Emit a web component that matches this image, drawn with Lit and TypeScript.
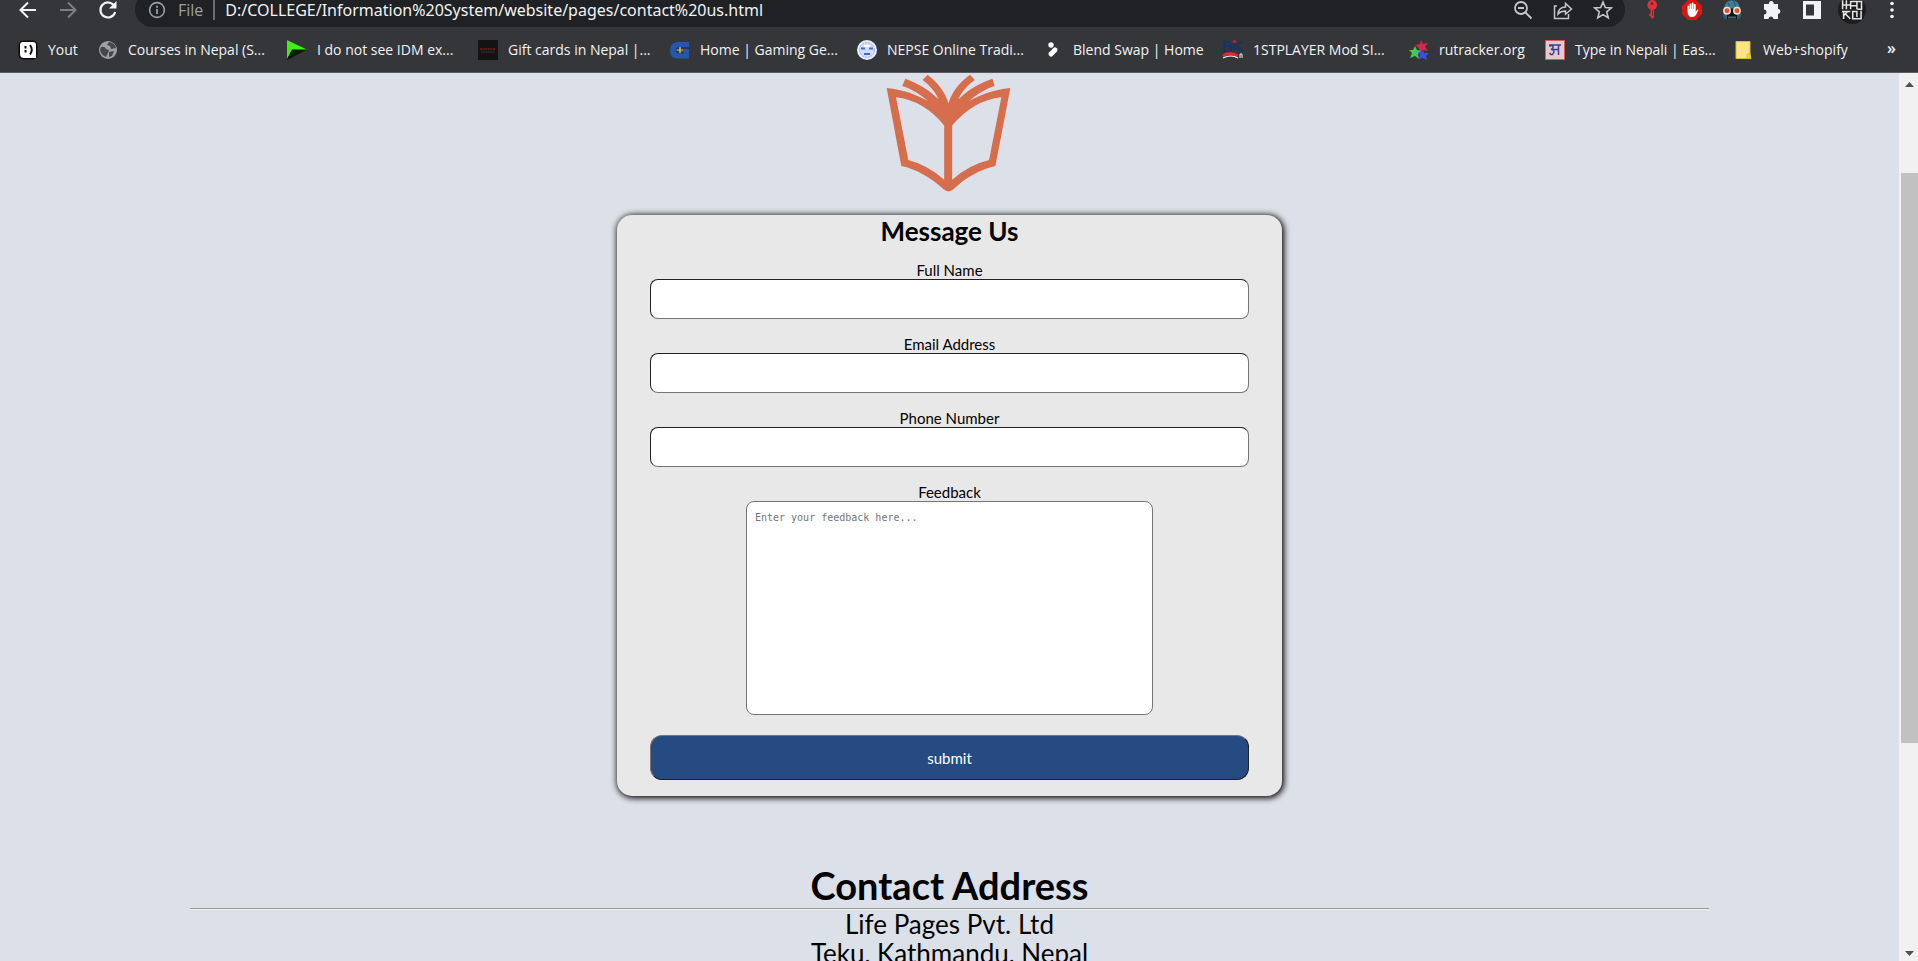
import { LitElement, html, css, svg } from "lit";
import { customElement } from "lit/decorators.js";

const icons = {
  back: svg`<path d="M18 10H3M10 2.500 2.500 10l7.500 7.500" fill="none" stroke="#f1f3f4" stroke-width="2"/>`,
  forward: svg`<path d="M2 10h15M10 2.500 17.500 10 10 17.500" fill="none" stroke="#7d7f83" stroke-width="2"/>`,
  reload: svg`<path d="M16 5.500A7.500 7.500 0 1 0 17.200 12" fill="none" stroke="#f1f3f4" stroke-width="2.200"/><path d="M18.500 1v7.500H11z" fill="#f1f3f4"/>`,
  info: svg`<circle cx="10" cy="10" r="7.400" fill="none" stroke="#9aa0a6" stroke-width="1.600"/><path d="M10 9v5M10 5.700v2" stroke="#9aa0a6" stroke-width="1.800"/>`,
  zoomOut: svg`<circle cx="8" cy="8" r="6" fill="none" stroke="#c4c6c9" stroke-width="1.800"/><path d="M12.500 12.500 18.500 18.500M5 8h6" stroke="#c4c6c9" stroke-width="1.800"/>`,
  share: svg`<path d="M4 6H1.500v12.500h14V14M5 14c.5-5 3.500-7 7.500-7V3.500L18.500 9l-6 5.200V11c-3.500 0-5.500.8-7.500 3z" fill="none" stroke="#c4c6c9" stroke-width="1.500"/>`,
  star: svg`<path d="m10 2 2.300 5.500 6 .5-4.600 3.900 1.500 5.900L10 14.600l-5.200 3.200 1.500-5.900L1.700 8l6-.5z" fill="none" stroke="#c4c6c9" stroke-width="1.600"/>`,
  key: svg`<path d="M10 0a5 5 0 0 1 2 9.600V17l-1.800 2-1.700-2v-1H7.300v-2.500H8.500V9.600A5 5 0 0 1 10 0z" fill="#e32f3a"/><circle cx="10" cy="3.500" r="1.300" fill="#35363a"/><path d="M10.500 10v6" stroke="#8d2029"/>`,
  hand: svg`<path d="M6 0h8l6 6v8l-6 6H6l-6-6V6z" fill="#dc150f"/><path d="M5.500 11V6.500q0-1 .8-1t.8 1V9h.4V4.500q0-1 .9-1t.9 1V9h.4V3.500q0-1 .9-1t.9 1V9h.4V5q0-1 .9-1t.9 1v7l1.300-2q.8-.9 1.500-.2l-2.500 5.200q-1 2-4 2-4.500 0-4.500-6z" fill="#fff"/>`,
  skull: svg`<path d="M2 9Q2.500 1 10 0q7.500 1 8 9z" fill="#3d7f99"/><path d="M10 0q4 2 3 6M6 3l2 3" stroke="#215168" fill="none"/><path d="M1 14h18v2l-2 3H3l-2-3z" fill="#2f5f70"/><path d="M5 12h10v7H5z" fill="#101416"/><path d="M1 10.500h18" stroke="#151515" stroke-width="4"/><circle cx="5" cy="10.700" r="3.200" fill="#dd5233" stroke="#f7e0d2" stroke-width="1.500"/><circle cx="15" cy="10.700" r="3.200" fill="#dd5233" stroke="#f7e0d2" stroke-width="1.500"/><path d="M6.500 17.500h7.500" stroke="#7fb2c6" stroke-width="2" stroke-dasharray="1 1"/>`,
  puzzle: svg`<path d="M2 4h5a2.400 2.400 0 1 1 4.600 0H16v5a2.400 2.400 0 1 1 0 4.800V19h-4.500a2.500 2.500 0 0 0-5 0H2v-4.500a2.500 2.500 0 0 0 0-5z" fill="#f1f3f4"/>`,
  panel: svg`<path d="M1 1h18v18H1zM4 4.500v11h8v-11z" fill="#f1f3f4" fill-rule="evenodd"/>`,
  avatar: svg`<circle cx="10" cy="10" r="10" fill="#1d1d1e"/><path d="M3.300 3v6.500M6 3v6.500M3.300 6.500H9M9 3.500v6M9 4h4.500v5.500M9 7h4.500M13.500 4h3.300v5.500h-3M2.800 11h6M4 11v5.500M4 14l2.500-2.500M5.500 13l3.300 3.300M10.500 10.500v5.800H17M10.500 11h3v4M16.500 10.500v5.800" fill="none" stroke="#e4e4e4" stroke-width="1.100"/>`,
  menu: svg`<circle cx="10" cy="3.500" r="1.800" fill="#f1f3f4"/><circle cx="10" cy="10" r="1.800" fill="#f1f3f4"/><circle cx="10" cy="16.500" r="1.800" fill="#f1f3f4"/>`,
};

const bookmarks = [
  { text: "Yout", space: 80, icon: svg`<rect x=".5" y=".5" width="19" height="19" rx="5" fill="#0b0b0b"/><path d="M5 2h10q3 0 3 3v13H6q-4 0-4-4V5q0-3 3-3z" fill="#fff"/><path d="M7.500 6v2.500M7.500 10v2.500M12 5q3.500 4.500 0 9.500" fill="none" stroke="#111" stroke-width="2"/>` },
  { text: "Courses in Nepal (S...", space: 189, icon: svg`<circle cx="10" cy="10" r="9" fill="#9da1a6"/><path d="M3 7q4-1 5 2l3 1-1 3-2 4q-5-2-6-7zM11 2l-2 3 3 1 1 3 5-1q-1-5-7-6zM11 12l5-1-2 5-3 1z" fill="#45474b"/>` },
  { text: "I do not see IDM ex...", space: 191, icon: svg`<path d="M0 0 20 9.500 0 20z" fill="#111"/><path d="M0 0 20 9.500 5 9.500 0 19z" fill="#43ef0c"/><path d="M0 20 5 10h14z" fill="#0c1a08"/>` },
  { text: "Gift cards in Nepal |...", space: 192, icon: svg`<path d="M0 0h20v20H0z" fill="#131313"/><path d="M2 9h16" stroke="#8a1717" stroke-width="1.500" stroke-dasharray="2 .6"/><path d="M3 12h14" stroke="#444" stroke-width=".7"/>` },
  { text: "Home | Gaming Ge...", space: 187, icon: svg`<path d="M19 2v5H9q-3.500 0-3.500 3T9 13.500h5V12h-3V9h8v9.500H8q-8 0-8-8T8 2z" fill="#2359a8"/><path d="M6.500 10h4" stroke="#38c5a1" stroke-width="1.500"/><path d="M10 10h3" stroke="#ee5b45" stroke-width="1.500"/><path d="M10 7v6" stroke="#f1d24b" stroke-width="1.300"/>` },
  { text: "NEPSE Online Tradi...", space: 186, icon: svg`<circle cx="10" cy="10" r="10" fill="#e9edfc"/><circle cx="10" cy="10" r="7.500" fill="#d3dbfa" stroke="#9db0f0" stroke-dasharray="2 1"/><path d="M4 8.500h4M12 8.500h4M7 14h6" stroke="#4867cf" stroke-width="1.800"/><path d="M7 6h6" stroke="#fff" stroke-width="2"/>` },
  { text: "Blend Swap | Home", space: 180, icon: svg`<circle cx="8" cy="5" r="2.700" fill="#fff"/><path d="m8 14 4-4" stroke="#fff" stroke-width="5" stroke-linecap="round"/>` },
  { text: "1STPLAYER Mod SI...", space: 186, icon: svg`<path d="M1.500 1.500V11h4q3 0 3-2.500T6 6q1.500-.5 1.500-2T5 1.500zM1.500 6H6M11.500 4v7M19.500 2.500h-2q-3 0-3 4t3 4h2" fill="none" stroke="#17306e" stroke-width="1.800"/><circle cx="11.500" cy="1.500" r="1.300" fill="#e22"/><path d="M0 16q7-5 14.500 0" fill="none" stroke="#e3272c" stroke-width="3"/><path d="M0 18q8-4 15 0" fill="none" stroke="#f3f3ff" stroke-width="1.200"/><path d="M17 18v-4h2v4" stroke="#eee" fill="none"/>` },
  { text: "rutracker.org", space: 136, icon: svg`<path d="m12 0 2 4 5-1-3 4 3 4-5-1-4 3V8L6 5l5-1z" fill="#d5284d"/><path d="m6 6 2 4 4 1-3 3 1 5-4-3-5 2 2-5-3-3h4z" fill="#42c95d"/><path d="m14 9 1 4 5 0-3 3 1 4-4-2-4 1 1-4-2-3 4 0z" fill="#3f4ae8"/>` },
  { text: "Type in Nepali | Eas...", space: 188, icon: svg`<path d="M.5.5h19v19H.5z" fill="#e8c8ca" stroke="#db5950"/><path d="M4.500 6.500q3-2 3.500 0t-2 3q4 0 2.500 3.500T4.500 13M8 9.500h5M4 5h12M13.500 5v10" fill="none" stroke="#37409a" stroke-width="1.500"/>` },
  { text: "Web+shopify", space: 130, icon: svg`<path d="M3 1.500h14V14l1 4.500H3z" fill="#fbe488" stroke="#d9bd43"/><path d="M14 18.500v-4l3-1v5z" fill="#f4d457" stroke="#d9bd43"/>` },
];

const glyph = (shape: unknown) =>
  html`<svg class="glyph" viewBox="0 0 20 20" aria-hidden="true">${shape}</svg>`;

@customElement("browser-bar")
class BrowserBar extends LitElement {
  static styles = css`
    :host {
      display: block;
      overflow: hidden;
      flex: none;
      background: #35363a;
      border-bottom: 1px solid #5b5c5f;
      font-family: "Open Sans", "Noto Sans", sans-serif;
      color: #f1f3f4;
    }
    .toolbar {
      display: flex;
      align-items: center;
      height: 35px;
      margin-top: -8px;
      padding: 0 6px 0 8px;
    }
    .tool {
      flex: none;
      display: grid;
      place-items: center;
      width: 40px;
      height: 35px;
      border: 0;
      padding: 0;
      background: none;
    }
    .glyph {
      display: block;
      width: 20px;
      height: 20px;
      flex: none;
      overflow: visible;
    }
    .tool.large .glyph {
      width: 28px;
      height: 28px;
    }
    .omnibox {
      flex: 1;
      min-width: 0;
      display: flex;
      align-items: center;
      height: 35px;
      margin: 0 7px;
      padding: 0 2px 0 12px;
      border-radius: 18px;
      background: #202124;
    }
    .scheme {
      padding: 0 10px 0 11px;
      margin-right: 10px;
      border-right: 2px solid #6b6d70;
      font-size: 16px;
      line-height: 20px;
      color: #9aa0a6;
    }
    .address {
      flex: 1;
      min-width: 0;
      border: 0;
      padding: 0;
      outline: 0;
      background: none;
      color: #f1f3f4;
      font: 16px/24px "Noto Sans", "Open Sans", sans-serif;
    }
    .bookmarks {
      display: flex;
      align-items: center;
      height: 45px;
      padding: 0 22px 0 18px;
    }
    .bookmark {
      flex: none;
      display: flex;
      align-items: center;
      gap: 10px;
      color: inherit;
      text-decoration: none;
      white-space: nowrap;
      font-size: 14px;
      line-height: 20px;
    }
    .more {
      margin-left: auto;
      border: 0;
      padding: 0 0 4px;
      background: none;
      color: inherit;
      font: 600 16px/20px "Open Sans", sans-serif;
    }
  `;

  tool(name: keyof typeof icons, label: string, size = "") {
    return html`<button class="tool ${size}" aria-label=${label}>${glyph(icons[name])}</button>`;
  }

  render() {
    return html`
      <div class="toolbar">
        ${this.tool("back", "Back")} ${this.tool("forward", "Forward")}
        ${this.tool("reload", "Reload")}
        <div class="omnibox">
          ${glyph(icons.info)}
          <span class="scheme">File</span>
          <input
            class="address"
            aria-label="Address"
            value="D:/COLLEGE/Information%20System/website/pages/contact%20us.html"
          />
          ${this.tool("zoomOut", "Zoom")} ${this.tool("share", "Share")}
          ${this.tool("star", "Bookmark this page")}
        </div>
        ${this.tool("key", "Password manager")} ${this.tool("hand", "Ad blocker")}
        ${this.tool("skull", "Downloader")} ${this.tool("puzzle", "Extensions")}
        ${this.tool("panel", "Side panel")} ${this.tool("avatar", "Profile", "large")}
        ${this.tool("menu", "Menu")}
      </div>
      <nav class="bookmarks" aria-label="Bookmarks">
        ${bookmarks.map(
          (b) => html`<a class="bookmark" href="#" style="width:${b.space}px">${glyph(b.icon)}${b.text}</a>`
        )}
        <button class="more" aria-label="More bookmarks">»</button>
      </nav>
    `;
  }
}

@customElement("contact-page")
class ContactPage extends LitElement {
  static styles = css`
    :host {
      display: block;
      flex: 1;
      min-width: 0;
      overflow: hidden;
      background: #dce0e8;
      color: #000;
      font-family: "Trebuchet MS", Lato, sans-serif;
      text-align: center;
    }
    .logo {
      display: block;
      width: 128px;
      height: 120px;
      margin: 0 auto 22px;
    }
    .card {
      box-sizing: border-box;
      width: 35%;
      min-width: 320px;
      margin: 0 auto;
      padding: 0 33px 16px;
      border-radius: 15px;
      background: #e8e8e8;
      box-shadow: 1px 1px 6px 1px #000;
    }
    .title {
      margin: 0 0 14px;
      font-size: 26px;
      line-height: 32px;
    }
    .field {
      display: flex;
      flex-direction: column;
      align-items: center;
      margin-bottom: 16px;
    }
    .label {
      font-size: 15px;
      line-height: 18px;
    }
    .input {
      box-sizing: border-box;
      width: 100%;
      height: 40px;
      padding: 0 10px;
      border: 1px inset #767676;
      border-radius: 8px;
      background: #fff;
    }
    .area {
      box-sizing: border-box;
      width: 68%;
      height: 214px;
      padding: 9px 8px;
      border: 1px solid #767676;
      border-radius: 8px;
      margin-bottom: 4px;
      background: #fff;
      resize: none;
      font: 10px/13px "DejaVu Sans Mono", monospace;
    }
    .area::placeholder {
      color: #757575;
    }
    .submit {
      display: block;
      width: 100%;
      height: 45px;
      border: 1px outset #767676;
      border-radius: 12px;
      background: #264b82;
      color: #fff;
      font: 15px/18px "Trebuchet MS", Lato, sans-serif;
    }
    .contact {
      width: 80%;
      margin: 66px auto 0;
      font-size: 26px;
      line-height: 29px;
    }
    .heading {
      margin: 0 0 1px;
      font-size: 38px;
      line-height: 46px;
      border-bottom: 1px solid #9a9a9a;
      box-shadow: 0 1px #eee;
    }
    .line {
      margin: 0;
    }
  `;

  render() {
    return html`
      <svg class="logo" viewBox="77 24 385 361" role="img" aria-label="Life Pages">
        <path
          fill="#d66e4e"
          fill-rule="evenodd"
          d="M79 69C130 74 170 90 203 108C185 92 155 72 126 63L135 41C170 53 210 77 235 103C228 85 210 62 187 45L202 29C230 50 255 80 265 115C275 80 300 50 330 29L344 45C320 62 302 85 295 103C320 77 360 53 397 41L404 63C375 72 345 92 327 108C360 90 400 74 451 69L406 304C360 314 315 340 280 374Q265 387 250 374C215 340 165 312 123 304ZM107 97L144 286Q200 300 252 345V182Q190 106 107 97ZM424 97Q340 106 276 182V345Q328 300 387 286Z"
        />
      </svg>
      <form class="card" @submit=${(e: Event) => e.preventDefault()}>
        <h2 class="title">Message Us</h2>
        <div class="field">
          <label class="label" for="name">Full Name</label>
          <input class="input" id="name" type="text" />
        </div>
        <div class="field">
          <label class="label" for="email">Email Address</label>
          <input class="input" id="email" type="email" />
        </div>
        <div class="field">
          <label class="label" for="phone">Phone Number</label>
          <input class="input" id="phone" type="tel" />
        </div>
        <div class="field">
          <label class="label" for="feedback">Feedback</label>
          <textarea class="area" id="feedback" placeholder="Enter your feedback here..."></textarea>
        </div>
        <button class="submit" type="submit">submit</button>
      </form>
      <section class="contact">
        <h1 class="heading">Contact Address</h1>
        <p class="line">Life Pages Pvt. Ltd</p>
        <p class="line">Teku, Kathmandu, Nepal</p>
      </section>
    `;
  }
}

@customElement("app-root")
class AppRoot extends LitElement {
  static styles = css`
    :host {
      display: flex;
      flex-direction: column;
      height: 100vh;
      overflow: hidden;
    }
    .body {
      flex: 1;
      min-height: 0;
      display: flex;
    }
    .scrollbar {
      flex: none;
      box-sizing: border-box;
      width: 19px;
      padding: 9px 0 5px 2px;
      display: grid;
      grid-template-rows: 5px 86fr 569fr 208fr 5px;
      justify-items: center;
      background: #f1f1f1;
    }
    .arrow {
      width: 9px;
      height: 5px;
      fill: #505050;
    }
    .thumb {
      grid-row: 3;
      width: 100%;
      background: #c1c1c1;
    }
    .arrow.down {
      grid-row: 5;
    }
  `;

  render() {
    return html`
      <browser-bar></browser-bar>
      <div class="body">
        <contact-page></contact-page>
        <div class="scrollbar" aria-hidden="true">
          <svg class="arrow" viewBox="0 0 9 5"><path d="M0 5 4.500 0 9 5z" /></svg>
          <div class="thumb"></div>
          <svg class="arrow down" viewBox="0 0 9 5"><path d="M0 0h9L4.500 5z" /></svg>
        </div>
      </div>
    `;
  }
}
